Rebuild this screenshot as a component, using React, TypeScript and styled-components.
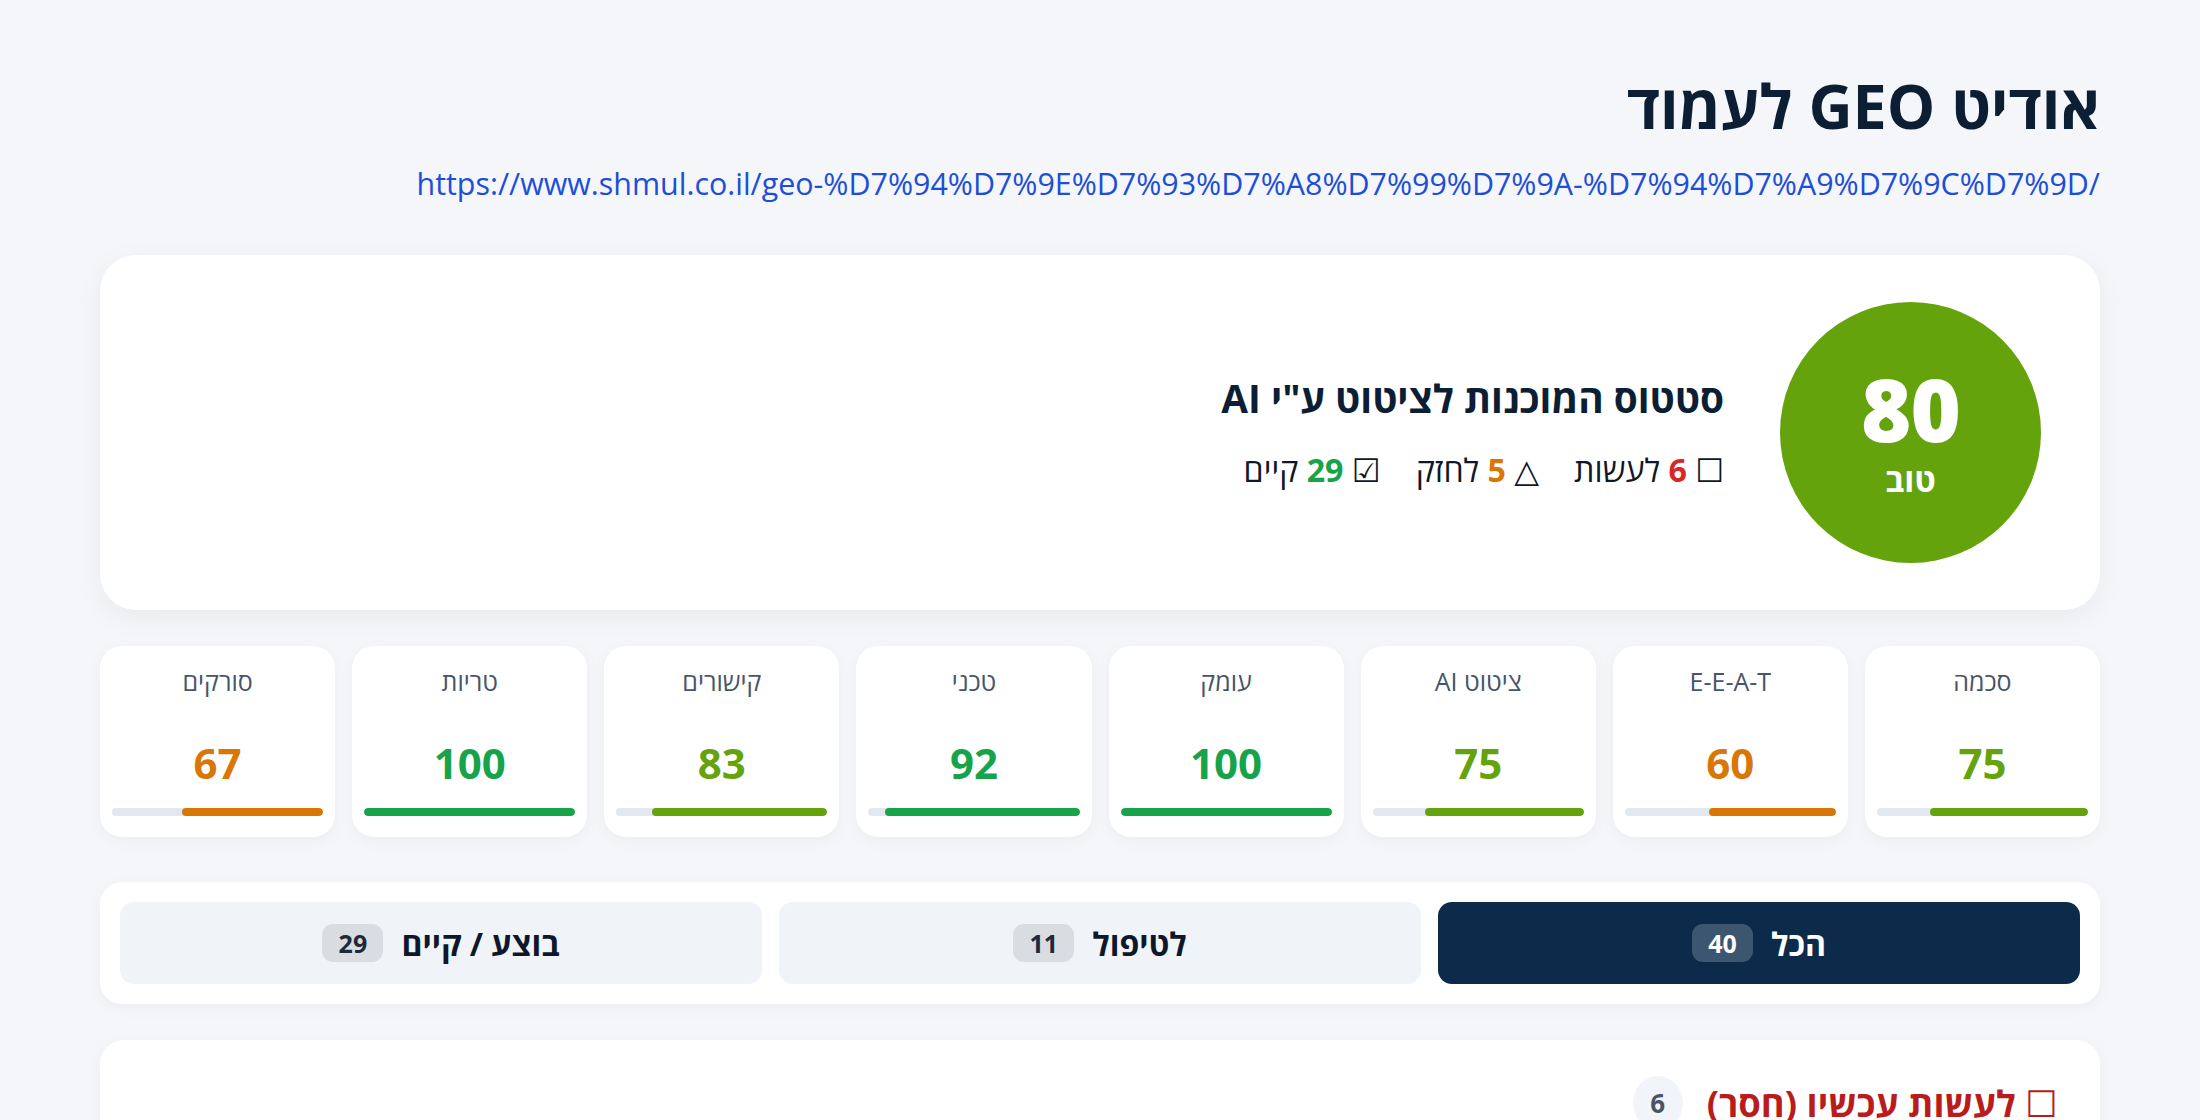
import React from "react";
import styled, { createGlobalStyle } from "styled-components";

const GlobalStyle = createGlobalStyle`
  html, body {
    margin: 0;
    padding: 0;
    background: #f4f6f9;
  }
  body {
    font-family: "Open Sans", "Noto Sans", "DejaVu Sans", sans-serif;
    color: #0f172a;
  }
  * { box-sizing: border-box; }
`;

const colors = {
  lime: "#65a30d",
  green: "#16a34a",
  orange: "#d97706",
  red: "#dc2626",
};

const categories = [
  { label: "סכמה", score: 75 },
  { label: "E-E-A-T", score: 60 },
  { label: "ציטוט AI", score: 75 },
  { label: "עומק", score: 100 },
  { label: "טכני", score: 92 },
  { label: "קישורים", score: 83 },
  { label: "טריות", score: 100 },
  { label: "סורקים", score: 67 },
];

const scoreColor = (s: number) =>
  s >= 90 ? colors.green : s >= 70 ? colors.lime : colors.orange;

const tabs = [
  { label: "הכל", count: 40, active: true },
  { label: "לטיפול", count: 11, active: false },
  { label: "בוצע / קיים", count: 29, active: false },
];

const App = () => {
  return (
    <>
      <GlobalStyle />
      <Page dir="rtl">
        <Title>אודיט GEO לעמוד</Title>
        <UrlLine>
          <PageUrl dir="ltr" href="#">
            https://www.shmul.co.il/geo-%D7%94%D7%9E%D7%93%D7%A8%D7%99%D7%9A-%D7%94%D7%A9%D7%9C%D7%9D/
          </PageUrl>
        </UrlLine>

        <ScoreCard>
          <ScoreCircle>
            <ScoreNumber>80</ScoreNumber>
            <ScoreWord>טוב</ScoreWord>
          </ScoreCircle>
          <Summary>
            <SummaryTitle>סטטוס המוכנות לציטוט ע"י AI</SummaryTitle>
            <Stats>
              <Stat>
                ☐ <StatNum $color={colors.red}>6</StatNum> לעשות
              </Stat>
              <Stat>
                △ <StatNum $color={colors.orange}>5</StatNum> לחזק
              </Stat>
              <Stat>
                ☑ <StatNum $color={colors.green}>29</StatNum> קיים
              </Stat>
            </Stats>
          </Summary>
        </ScoreCard>

        <CategoryGrid>
          {categories.map((c) => (
            <CategoryCard key={c.label}>
              <CategoryLabel>{c.label}</CategoryLabel>
              <CategoryScore $color={scoreColor(c.score)}>{c.score}</CategoryScore>
              <Track>
                <Fill $color={scoreColor(c.score)} style={{ width: `${c.score}%` }} />
              </Track>
            </CategoryCard>
          ))}
        </CategoryGrid>

        <TabBar>
          {tabs.map((t) => (
            <Tab key={t.label} $active={t.active}>
              <span>{t.label}</span>
              <TabCount $active={t.active}>{t.count}</TabCount>
            </Tab>
          ))}
        </TabBar>

        <Section>
          <SectionHead>
            <SectionTitle>☐ לעשות עכשיו (חסר)</SectionTitle>
            <SectionCount>6</SectionCount>
          </SectionHead>
        </Section>
      </Page>
    </>
  );
};

export default App;

const Page = styled.div`
  width: 2000px;
  margin: 0 auto;
  padding: 69px 0 60px;
`;

const Title = styled.h1`
  margin: 0;
  font-size: 61px;
  line-height: 73px;
  font-weight: 700;
  color: #0b1e34;
`;

const UrlLine = styled.div`
  margin-top: 22px;
  font-size: 30.4px;
  line-height: 39px;
`;

const PageUrl = styled.a`
  color: #1d4ed8;
  text-decoration: none;
`;

const ScoreCard = styled.div`
  margin-top: 52px;
  background: #fff;
  border-radius: 36px;
  padding: 47px 59px;
  display: flex;
  align-items: center;
  gap: 56px;
  box-shadow: 0 8px 30px rgba(15, 23, 42, 0.05);
`;

const ScoreCircle = styled.div`
  width: 261px;
  height: 261px;
  border-radius: 50%;
  background: ${colors.lime};
  color: #fff;
  display: flex;
  flex-direction: column;
  align-items: center;
  justify-content: center;
  flex-shrink: 0;
`;

const ScoreNumber = styled.div`
  font-size: 86px;
  font-weight: 800;
  line-height: 1;
  letter-spacing: -1px;
`;

const ScoreWord = styled.div`
  margin-top: 8px;
  font-size: 33px;
  font-weight: 700;
  line-height: 1.2;
`;

const Summary = styled.div`
  display: flex;
  flex-direction: column;
  gap: 27px;
  padding-top: 2px;
`;

const SummaryTitle = styled.h2`
  margin: 0;
  font-size: 38.8px;
  line-height: 46px;
  font-weight: 700;
  color: #0b1e34;
`;

const Stats = styled.div`
  display: flex;
  gap: 35px;
  font-size: 32.2px;
  line-height: 44px;
  height: 44px;
  color: #0f172a;
`;

const Stat = styled.span`
  white-space: nowrap;
`;

const StatNum = styled.b<{ $color: string }>`
  color: ${(p) => p.$color};
  font-weight: 700;
`;

const CategoryGrid = styled.div`
  margin-top: 36px;
  display: grid;
  grid-template-columns: repeat(8, 1fr);
  gap: 17px;
`;

const CategoryCard = styled.div`
  background: #fff;
  border-radius: 22px;
  padding: 18px 12px 21px;
  display: flex;
  flex-direction: column;
  align-items: center;
  box-shadow: 0 4px 16px rgba(15, 23, 42, 0.04);
`;

const CategoryLabel = styled.div`
  font-size: 25px;
  line-height: 34px;
  color: #475569;
`;

const CategoryScore = styled.div<{ $color: string }>`
  margin-top: 40px;
  font-size: 42px;
  line-height: 50px;
  font-weight: 700;
  color: ${(p) => p.$color};
`;

const Track = styled.div`
  margin-top: 20px;
  width: 100%;
  height: 8px;
  border-radius: 8px;
  background: #e2e8f0;
  overflow: hidden;
`;

const Fill = styled.div<{ $color: string }>`
  height: 100%;
  border-radius: 8px;
  background: ${(p) => p.$color};
`;

const TabBar = styled.div`
  margin-top: 45px;
  background: #fff;
  border-radius: 22px;
  padding: 20px;
  display: grid;
  grid-template-columns: repeat(3, 1fr);
  gap: 17px;
  box-shadow: 0 4px 16px rgba(15, 23, 42, 0.04);
`;

const Tab = styled.div<{ $active: boolean }>`
  height: 82px;
  border-radius: 14px;
  display: flex;
  align-items: center;
  justify-content: center;
  gap: 18px;
  font-size: 32px;
  font-weight: 700;
  background: ${(p) => (p.$active ? "#0c2b4a" : "#f0f4f8")};
  color: ${(p) => (p.$active ? "#fff" : "#0f172a")};
`;

const TabCount = styled.span<{ $active: boolean }>`
  min-width: 61px;
  height: 38px;
  padding: 0 12px;
  border-radius: 11px;
  display: inline-flex;
  align-items: center;
  justify-content: center;
  font-size: 25px;
  font-weight: 700;
  background: ${(p) => (p.$active ? "#3d566f" : "#d9dde2")};
  color: ${(p) => (p.$active ? "#fff" : "#1e293b")};
`;

const Section = styled.div`
  margin-top: 36px;
  background: #fff;
  border-radius: 24px;
  padding: 36px 42px 40px;
  min-height: 200px;
  box-shadow: 0 4px 16px rgba(15, 23, 42, 0.04);
`;

const SectionHead = styled.div`
  display: flex;
  align-items: center;
  gap: 24px;
`;

const SectionTitle = styled.h3`
  margin: 0;
  font-size: 36.4px;
  line-height: 48px;
  font-weight: 700;
  color: #b91c1c;
`;

const SectionCount = styled.span`
  width: 50px;
  height: 54px;
  border-radius: 50%;
  background: #f1f5f9;
  color: #475569;
  font-size: 26px;
  font-weight: 700;
  display: inline-flex;
  align-items: center;
  justify-content: center;
`;
